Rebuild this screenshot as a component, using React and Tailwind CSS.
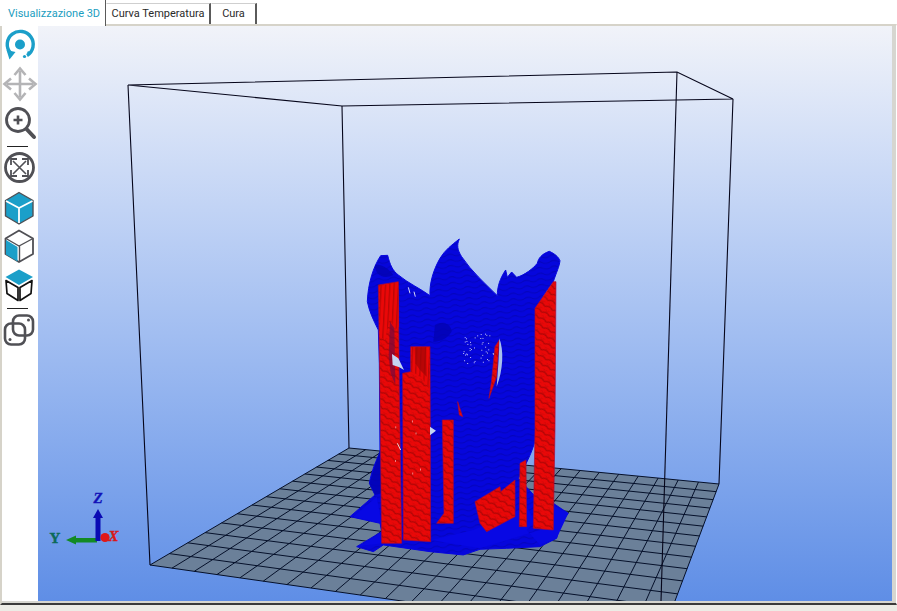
const gridU = 20;
const gridV = 14;
const floorQuad = [
  [349, 448],
  [719, 484],
  [661, 638],
  [150, 565],
];

// unit square -> floor quad, perspective mapping
function floorPoint(u, v) {
  const [[x0, y0], [x1, y1], [x2, y2], [x3, y3]] = floorQuad;
  const dx1 = x1 - x2;
  const dx2 = x3 - x2;
  const sx = x0 - x1 + x2 - x3;
  const dy1 = y1 - y2;
  const dy2 = y3 - y2;
  const sy = y0 - y1 + y2 - y3;
  const det = dx1 * dy2 - dx2 * dy1;
  const g = (sx * dy2 - dx2 * sy) / det;
  const h = (dx1 * sy - sx * dy1) / det;
  const a = x1 - x0 + g * x1;
  const b = x3 - x0 + h * x3;
  const d = y1 - y0 + g * y1;
  const e = y3 - y0 + h * y3;
  const w = g * u + h * v + 1;
  return [(a * u + b * v + x0) / w, (d * u + e * v + y0) / w];
}

function gridLines() {
  const lines = [];
  for (let i = 0; i <= gridU; i++) {
    lines.push([floorPoint(i / gridU, 0), floorPoint(i / gridU, 1)]);
  }
  for (let i = 0; i <= gridV; i++) {
    lines.push([floorPoint(0, i / gridV), floorPoint(1, i / gridV)]);
  }
  return lines;
}

function speckles(count, x, y, w, h) {
  const pts = [];
  let seed = 17;
  for (let i = 0; i < count; i++) {
    seed = (seed * 73 + 41) % 1009;
    const px = x + (seed / 1009) * w;
    seed = (seed * 73 + 41) % 1009;
    const py = y + (seed / 1009) * h;
    pts.push([px, py]);
  }
  return pts;
}

const bodyPath =
  "M82,215 C84,160 100,110 122,77 L143,76 C150,105 158,122 175,135 C205,160 240,175 270,197 C268,160 280,120 300,85 C315,60 335,45 358,27 C350,45 352,60 365,80 C395,125 435,160 472,197 C472,170 480,145 497,120 L502,142 L515,126 L530,142 C555,135 580,115 592,100 C595,85 605,72 628,64 C645,72 655,80 660,92 C658,110 650,125 640,155 C620,180 600,210 592,240 L592,600 C585,650 565,690 535,745 L600,815 L640,820 L685,850 L662,880 L650,925 L600,950 L500,955 L420,958 L370,975 L270,965 L130,945 L100,965 L50,950 L125,905 L120,880 L30,860 L105,795 L88,760 C95,720 110,690 120,665 L118,400 L115,300 C100,270 88,245 82,215 Z";

const redShapes = [
  "115,165 175,155 178,480 185,940 125,940 120,500",
  "188,430 212,425 212,350 270,350 272,935 190,930",
  "307,570 340,570 340,880 290,880 312,850",
  "585,235 640,155 648,155 645,600 640,900 580,895 585,600",
  "540,700 558,690 560,890 538,890",
  "405,815 480,770 482,785 525,750 525,860 440,905 420,880",
  "465,350 478,330 470,440 447,505 455,450",
  "353,515 368,560 358,555",
];

function Model() {
  return (
    <g transform="translate(340 230) scale(0.3333)">
      <defs>
        <pattern id="scales" width="26" height="20" patternUnits="userSpaceOnUse" patternTransform="rotate(28)">
          <rect width="26" height="20" fill="#ea0808" />
          <path d="M0 14 Q13 3 26 14" fill="none" stroke="#b00606" strokeWidth="3.6" />
          <path d="M-13 4 Q0 -7 13 4 M13 4 Q26 -7 39 4" fill="none" stroke="#c80707" strokeWidth="2.6" />
        </pattern>
        <pattern id="streaks" width="13" height="60" patternUnits="userSpaceOnUse" patternTransform="rotate(3)">
          <rect width="13" height="60" fill="#ea0808" />
          <rect width="4" height="60" fill="#bb0606" />
        </pattern>
        <pattern id="waves" width="44" height="17" patternUnits="userSpaceOnUse" patternTransform="rotate(-6)">
          <rect width="44" height="17" fill="#0606dc" />
          <path d="M0 8 Q11 1 22 8 T44 8" fill="none" stroke="#0404bc" strokeWidth="3" />
        </pattern>
      </defs>
      <path d={bodyPath} fill="url(#waves)" stroke="#0606de" strokeWidth="3" strokeLinejoin="round" />
      <path d="M40,860 L110,800 L125,880 Z M60,948 L125,905 L130,940 Z M640,825 L685,850 L650,925 L600,945 L560,900 Z M272,930 L420,955 L600,900 L560,830 L400,900 Z" fill="#0808e4" />
      <path d="M120,660 L88,760 L105,795 L125,790 Z M285,285 C310,270 335,285 335,305 C320,330 295,335 280,335 Z M105,105 C125,100 150,120 160,135 C130,150 105,135 105,105 Z" fill="#0303b0" opacity="0.75" />
      {redShapes.map((points) => (
        <polygon key={points} points={points} fill="url(#scales)" stroke="#a80a3a" strokeWidth="2" strokeLinejoin="round" />
      ))}
      <path d="M118,168 L175,157 L176,290 L165,300 L150,265 L135,330 L120,320 Z" fill="url(#streaks)" />
      <path d="M214,352 L268,352 L269,480 L245,440 L214,425 Z" fill="url(#streaks)" />
      <path d="M224,352 L258,352 L260,440 L240,420 L226,400 Z" fill="#a20606" opacity="0.7" />
      <path d="M150,275 L163,295 L166,465 L152,430 L146,380 Z" fill="#7a0a3c" opacity="0.75" />
      <path d="M478,325 C492,360 490,420 470,470 C474,420 478,370 478,325 Z" fill="#a8bfec" />
      <path d="M156,372 L175,385 L192,420 L178,412 L158,405 Z" fill="#c4d4f2" />
      <path d="M270,590 L288,602 L270,616 Z" fill="#c4d4f2" />
      <path d="M205,172 L210,190 M222,185 L226,200 M172,640 L182,660" stroke="#fff" strokeWidth="2.5" />
      {speckles(44, 365, 310, 95, 90).map(([x, y]) => (
        <rect key={`${x}-${y}`} x={x} y={y} width="2.6" height="2.6" fill="#ffffff" />
      ))}
      {speckles(6, 130, 500, 130, 240).map(([x, y]) => (
        <rect key={`${x}-${y}`} x={x} y={y} width="2.4" height="6" fill="#f4a0a0" />
      ))}
    </g>
  );
}

function AxisWidget() {
  return (
    <g>
      <path d="M97,538 L76,538 L76,535.5 L66,540 L76,544.5 L76,542.5 L97,542.5 Z" fill="#128a24" />
      <path d="M95.5,541 L95.5,518 L93,518 L98,509 L103,518 L100.5,518 L100.5,541 Z" fill="#0a0ab4" />
      <circle cx="105" cy="537.5" r="4.6" fill="#e01818" />
      <text x="98" y="503" textAnchor="middle" fontSize="15" fontWeight="700" fontStyle="italic" fill="#1212b8" stroke="#1212b8" strokeWidth="0.4" fontFamily="Liberation Serif, serif">Z</text>
      <text x="55" y="543" textAnchor="middle" fontSize="15" fontWeight="700" fill="#0c6a58" stroke="#0c6a58" strokeWidth="0.4" fontFamily="Liberation Serif, serif">Y</text>
      <text x="113.5" y="541" textAnchor="middle" fontSize="15" fontWeight="700" fontStyle="italic" fill="#d81818" stroke="#d81818" strokeWidth="0.4" fontFamily="Liberation Serif, serif">X</text>
    </g>
  );
}

function Scene() {
  return (
    <svg className="block h-full w-full" viewBox="38 26 854 575">
      <polygon points={floorQuad.map((p) => p.join(",")).join(" ")} fill="#6b8099" />
      <path d="M342 106 L349 448 M128 85 L150 565 M733 99 L719 484" stroke="#05051a" strokeWidth="1.1" fill="none" />
      {gridLines().map(([a, b]) => (
        <line key={`${a}-${b}`} x1={a[0]} y1={a[1]} x2={b[0]} y2={b[1]} stroke="#05102a" strokeWidth="1" />
      ))}
      <path d="M128 85 L677 72 L733 99 L342 106 Z" stroke="#05051a" strokeWidth="1.1" fill="none" />
      <Model />
      <path d="M677 72 L661 601" stroke="#05051a" strokeWidth="1.1" fill="none" />
      <AxisWidget />
    </svg>
  );
}

const gray = "#505055";
const cyan = "#1b9fc9";

function ToolIcons() {
  return (
    <svg className="block" width="36" height="326" viewBox="2 26 36 326">
      {/* rotate */}
      <path d="M10.5 53 A13 13 0 1 1 27 55.5" fill="none" stroke={cyan} strokeWidth="3.4" />
      <path d="M6.5 50 L15.5 52 L9.5 59.5 Z" fill={cyan} />
      <circle cx="20" cy="44.5" r="5" fill={cyan} />
      <circle cx="24.5" cy="56.5" r="1.6" fill={cyan} />
      <circle cx="28.5" cy="52.5" r="1.2" fill={cyan} />
      {/* move */}
      <path d="M20 71 L20 97 M7 84 L33 84" stroke="#b4b4b6" strokeWidth="2.6" />
      <path d="M14.5 75 L20 68.5 L25.5 75 M14.5 93 L20 99.5 L25.5 93 M11 78.5 L4.5 84 L11 89.5 M29 78.5 L35.5 84 L29 89.5" stroke="#b4b4b6" strokeWidth="2.6" fill="none" />
      {/* zoom */}
      <circle cx="18" cy="120" r="11.5" fill="none" stroke={gray} strokeWidth="2.8" />
      <path d="M26.5 129 L34 137" stroke={gray} strokeWidth="4" strokeLinecap="round" />
      <path d="M13.5 120 L22.5 120 M18 115.5 L18 124.5" stroke={gray} strokeWidth="2.6" />
      <path d="M7 146.5 L28 146.5" stroke="#222" strokeWidth="1" />
      {/* fit */}
      <circle cx="19.5" cy="167.5" r="14" fill="none" stroke={gray} strokeWidth="2.8" />
      <path d="M13 161 L26 174 M26 161 L13 174" stroke={gray} strokeWidth="1.6" />
      <path d="M11 165 L11 159 L17 159 M22 159 L28 159 L28 165 M28 170 L28 176 L22 176 M17 176 L11 176 L11 170" stroke={gray} strokeWidth="1.8" fill="none" />
      {/* cube filled */}
      <path d="M19 192.5 L33 200.5 L33 216 L19 224 L5.5 216 L5.5 200.5 Z" fill={cyan} stroke={gray} strokeWidth="1.4" strokeLinejoin="round" />
      <path d="M6 201 L19 208 L32.5 201 M19 208 L19 223" stroke="#fff" strokeWidth="1.8" fill="none" />
      {/* cube left face */}
      <path d="M19 230.5 L33 238.5 L33 254 L19 262 L5.5 254 L5.5 238.5 Z" fill="#fff" stroke={gray} strokeWidth="1.8" strokeLinejoin="round" />
      <path d="M6 240 L17.5 247 L17.5 261.5 L6 254.5 Z" fill={cyan} />
      <path d="M6 238.5 L19 246 L33 238.5 M19.5 246 L19.5 262" stroke={gray} strokeWidth="1.4" fill="none" />
      {/* cube top face */}
      <path d="M19 269.5 L33 277 L19 285 L5.5 277 Z" fill={cyan} />
      <path d="M6 280.5 L18 287.5 L18 300.5 L7 293.5 Z M32 280.5 L20 287.5 L20 300.5 L31 293.5 Z" fill="#fff" stroke="#111" strokeWidth="1.7" strokeLinejoin="round" />
      <path d="M7 308.5 L28 308.5" stroke="#222" strokeWidth="1" />
      {/* copy */}
      <rect x="13" y="315.5" width="20" height="20" rx="6" fill="none" stroke={gray} strokeWidth="2.6" />
      <rect x="5" y="323.5" width="20" height="21" rx="6" fill="none" stroke={gray} strokeWidth="2.6" />
      <circle cx="28.5" cy="320" r="1.5" fill={gray} />
      <circle cx="10" cy="339.5" r="1.5" fill={gray} />
    </svg>
  );
}

function Tab({ label, active, className }) {
  if (active) {
    return (
      <div className={`relative z-10 flex h-[26px] shrink-0 items-start whitespace-nowrap border-r border-r-[#5a5a5a] bg-white pt-[6px] text-[#1a9dc0] ${className}`}>
        {label}
      </div>
    );
  }
  return (
    <div className={`mt-[3px] flex h-[21px] shrink-0 items-center justify-center whitespace-nowrap border-t border-r-2 border-l border-t-[#cfcfcf] border-r-[#5a5a5a] border-l-white bg-white text-[#2a2a2a] ${className}`}>
      {label}
    </div>
  );
}

export default function App() {
  return (
    <div className="flex h-[611px] w-[897px] flex-col overflow-hidden bg-[#ecece6] font-['Roboto',sans-serif] text-[11px]">
      <div className="flex h-[24px] shrink-0 bg-white">
        <Tab label="Visualizzazione 3D" active className="w-[106px] pl-[8px]" />
        <Tab label="Curva Temperatura" className="w-[105px]" />
        <Tab label="Cura" className="w-[46px]" />
      </div>
      <div className="flex h-[581px] shrink-0 border-t-2 border-r-[1px] border-b-[2px] border-l-2 border-t-[#d6d3c9] border-r-white border-b-[#3a3a3a] border-l-[#d6d3c9]">
        <div className="flex min-w-0 flex-1 border-r-[4px] border-b-2 border-r-[#d6d6d0] border-b-[#d6d6d0]">
          <div className="w-[36px] shrink-0 bg-white">
            <ToolIcons />
          </div>
          <div className="min-w-0 flex-1 bg-linear-to-b from-[#f1f3f9] to-[#5f8ee6]">
            <Scene />
          </div>
        </div>
      </div>
    </div>
  );
}
